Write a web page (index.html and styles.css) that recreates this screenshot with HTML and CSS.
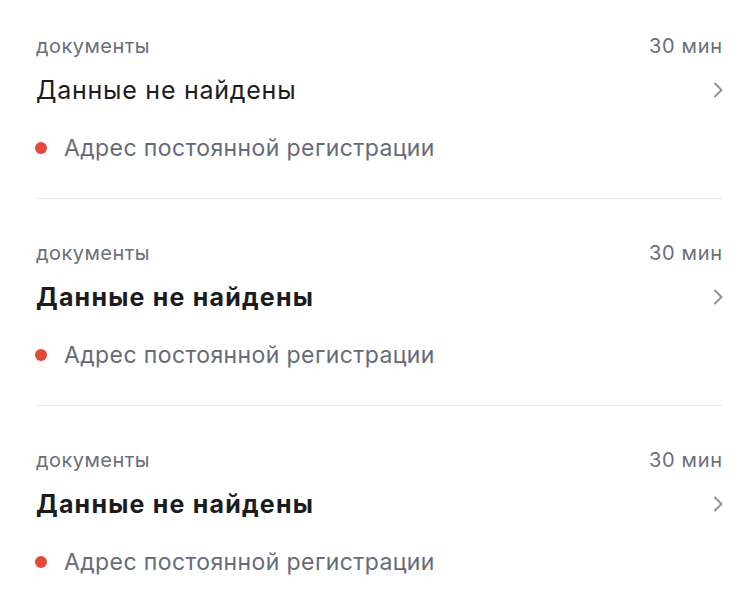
FILE: index.html
```html
<!DOCTYPE html>
<html lang="ru">
<head>
<meta charset="utf-8">
<link rel="stylesheet" href="styles.css">
</head>
<body>
<div class="list">
  <div class="item">
    <div class="meta"><span class="cat">документы</span><span class="time">30 мин</span></div>
    <div class="head"><span class="title">Данные не найдены</span>
      <svg class="chev" viewBox="0 0 10 16" width="10" height="16"><path d="M2 1.5 L8.5 8 L2 14.5" fill="none" stroke="#8e929c" stroke-width="2" stroke-linecap="round" stroke-linejoin="round"/></svg>
    </div>
    <div class="addr"><span class="dot"></span><span class="addr-text">Адрес постоянной регистрации</span></div>
  </div>
  <div class="item">
    <div class="meta"><span class="cat">документы</span><span class="time">30 мин</span></div>
    <div class="head"><span class="title bold">Данные не найдены</span>
      <svg class="chev" viewBox="0 0 10 16" width="10" height="16"><path d="M2 1.5 L8.5 8 L2 14.5" fill="none" stroke="#8e929c" stroke-width="2" stroke-linecap="round" stroke-linejoin="round"/></svg>
    </div>
    <div class="addr"><span class="dot"></span><span class="addr-text">Адрес постоянной регистрации</span></div>
  </div>
  <div class="item">
    <div class="meta"><span class="cat">документы</span><span class="time">30 мин</span></div>
    <div class="head"><span class="title bold">Данные не найдены</span>
      <svg class="chev" viewBox="0 0 10 16" width="10" height="16"><path d="M2 1.5 L8.5 8 L2 14.5" fill="none" stroke="#8e929c" stroke-width="2" stroke-linecap="round" stroke-linejoin="round"/></svg>
    </div>
    <div class="addr"><span class="dot"></span><span class="addr-text">Адрес постоянной регистрации</span></div>
  </div>
</div>
</body>
</html>
```
FILE: styles.css
```css
html, body {
  margin: 0;
  padding: 0;
  background: #ffffff;
}
body {
  font-family: Inter, "Noto Sans", "Liberation Sans", sans-serif;
}
.list {
  padding: 0 34px 0 36px;
}
.item {
  padding: 42px 0 36px;
  border-bottom: 1px solid #e9e9ec;
}
.item:first-child {
  padding-top: 34px;
}
.item:last-child {
  border-bottom: none;
}
.meta {
  display: flex;
  justify-content: space-between;
  font-size: 20px;
  line-height: 24px;
  color: #6b6f79;
}
.cat {
  letter-spacing: 0.45px;
}
.time {
  letter-spacing: 0.65px;
  margin-right: -0.65px;
}
.head {
  margin-top: 17px;
  display: flex;
  justify-content: space-between;
  align-items: center;
}
.title {
  font-size: 25px;
  line-height: 30px;
  color: #1c1c1e;
  font-weight: 400;
  letter-spacing: 0.75px;
}
.title.bold {
  font-weight: 700;
  letter-spacing: 1.2px;
}
.chev {
  display: block;
  margin-right: -1px;
}
.addr {
  margin-top: 29px;
  display: flex;
  align-items: center;
  gap: 17px;
  margin-left: -1px;
}
.dot {
  width: 12px;
  height: 12px;
  border-radius: 50%;
  background: #e8473b;
  flex: none;
}
.addr-text {
  font-size: 23px;
  line-height: 28px;
  color: #666b7a;
  letter-spacing: 0.4px;
}
```
